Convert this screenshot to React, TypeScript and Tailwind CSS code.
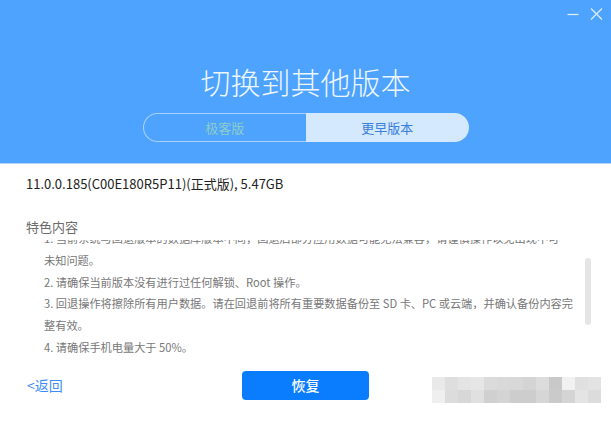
import React from 'react';

const wmTop = ['#e9e9e9', '#dedede', '#e4e4e4', '#e6e6e6', '#dbdbdb', '#d9d9d9', '#d8d8d8', '#d4d4d4', '#dcdcdc', '#c9c9c9', '#f1f1f1', '#e0e0e0', '#e3e3e3'];
const wmBottom = ['#efefef', '#dcdcdc', '#d7d7d7', '#e0e0e0', '#d0d0d0', '#d4d4d4', '#cdcdcd', '#cdcdcd', '#d6d6d6', '#cacaca', '#d4d4d4', '#e4e4e4', '#dcdcdc'];

export default function App() {
  return (
    <div
      className="w-[611px] h-[433px] bg-white overflow-hidden"
      style={{ fontFamily: '"Noto Sans CJK SC", "Noto Sans", sans-serif' }}
    >
      {/* header */}
      <div className="relative h-[164px] bg-[#4da3fe] border-b border-[#b4d5fb] flex flex-col items-center">
        <div className="absolute right-[8px] top-[7px] flex items-center gap-[11px]">
          <svg width="12" height="14" viewBox="0 0 12 14">
            <path d="M0.5 7.5 H11.5" stroke="#d9ebff" strokeWidth="1.3" />
          </svg>
          <svg width="13" height="14" viewBox="0 0 13 14">
            <path d="M1 1.5 L12 12.5 M12 1.5 L1 12.5" stroke="#d9ebff" strokeWidth="1.3" />
          </svg>
        </div>

        <h1 className="mt-[63px] h-[36px] text-[30px] leading-[36px] font-light text-[#eef6ff]">
          切换到其他版本
        </h1>

        <div className="mt-[14px] w-[326px] h-[29px] flex text-[13px]">
          <div className="flex-1 flex items-center justify-center rounded-l-full border border-r-0 border-[#a9d0fd] text-[#8ccdc9]">
            极客版
          </div>
          <div className="flex-1 flex items-center justify-center rounded-r-full bg-[#d4e8fe] text-[#3a80dc]">
            更早版本
          </div>
        </div>
      </div>

      {/* body */}
      <div className="pl-[26px]">
        <div className="mt-[10px] h-[20px] leading-[20px] text-[13px] text-[#222]">
          11.0.0.185(C00E180R5P11)(正式版), 5.47GB
        </div>
        <div className="mt-[23px] h-[20px] leading-[20px] text-[13px] text-[#6b6b6b]">特色内容</div>

        <div className="relative mt-[3px] h-[120px] overflow-hidden">
          <div className="-mt-[12px] pl-[18px] w-[554px] text-[11.2px] leading-[21.75px] text-[#777] whitespace-nowrap overflow-hidden">
            <div>1. 当前系统与回退版本的数据库版本不同，回退后部分应用数据可能无法兼容，请谨慎操作以免出现不可</div>
            <div>未知问题。</div>
            <div>2. 请确保当前版本没有进行过任何解锁、Root 操作。</div>
            <div>3. 回退操作将擦除所有用户数据。请在回退前将所有重要数据备份至 SD 卡、PC 或云端，并确认备份内容完</div>
            <div>整有效。</div>
            <div>4. 请确保手机电量大于 50%。</div>
          </div>
          <div className="absolute left-[559px] top-[18px] w-[6px] h-[67px] rounded-full bg-[#e5e5e5]" />
        </div>
      </div>

      {/* footer */}
      <div className="mt-[11px] flex items-start">
        <a className="ml-[27px] w-[215px] h-[29px] leading-[29px] text-[14px] text-[#3d8cf5]">&lt;返回</a>
        <button className="w-[127px] h-[29px] rounded-[4px] bg-[#0a7dff] text-white text-[14px] font-medium">
          恢复
        </button>
        <div className="ml-[63px] mt-[6px] flex flex-col">
          <div className="flex">
            {wmTop.map((c, i) => (
              <div key={i} className="w-[13px] h-[13px]" style={{ backgroundColor: c }} />
            ))}
          </div>
          <div className="flex">
            {wmBottom.map((c, i) => (
              <div key={i} className="w-[13px] h-[13px]" style={{ backgroundColor: c }} />
            ))}
          </div>
        </div>
      </div>
    </div>
  );
}
